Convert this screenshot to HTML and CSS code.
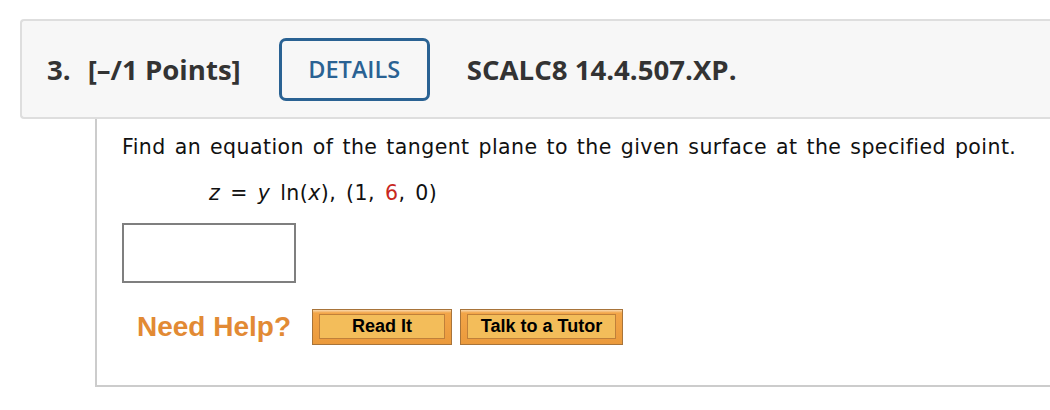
FILE: index.html
```html
<!DOCTYPE html>
<html>
<head>
<meta charset="utf-8">
<link rel="stylesheet" href="styles.css">
</head>
<body>
<div class="page">
  <div class="header">
    <span class="qnum">3.</span>
    <span class="points">[–/1 Points]</span>
    <button class="details">DETAILS</button>
    <span class="code">SCALC8 14.4.507.XP.</span>
  </div>
  <div class="content">
    <p class="prompt">Find an equation of the tangent plane to the given surface at the specified point.</p>
    <p class="formula"><i>z</i> = <i>y</i> ln(<i>x</i>), (1, <span class="red">6</span>, 0)</p>
    <div class="answer"></div>
    <div class="help">
      <span class="need">Need Help?</span>
      <span class="hbtn read"><span class="inner">Read It</span></span>
      <span class="hbtn tutor"><span class="inner">Talk to a Tutor</span></span>
    </div>
  </div>
</div>
</body>
</html>
```
FILE: styles.css
```css
html, body { margin: 0; padding: 0; background: #fff; }
.page { padding: 19px 0 0 20px; }
.header {
  box-sizing: border-box;
  height: 100px;
  border: 2px solid #dedede;
  border-right: none;
  border-radius: 4px 0 0 4px;
  background: #f7f7f7;
  display: flex;
  align-items: center;
  padding-left: 25px;
  font-family: "Open Sans", sans-serif;
  font-weight: 700;
  color: #333;
  font-size: 27.6px;
}
.qnum { margin-right: 17px; }
.details {
  box-sizing: border-box;
  width: 151px;
  height: 63px;
  margin: 0 37px 0 38px;
  border: 3px solid #2a6293;
  border-radius: 7px;
  background: transparent;
  color: #2a6293;
  font-family: "Open Sans", sans-serif;
  font-weight: 600;
  font-size: 23.5px;
  padding: 0;
}
.content {
  box-sizing: border-box;
  margin-left: 75px;
  height: 268px;
  border-left: 2px solid #cccccc;
  border-bottom: 2px solid #cccccc;
  padding: 15px 0 0 25px;
  font-family: "DejaVu Sans", Verdana, sans-serif;
  color: #111;
  font-size: 20.5px;
  letter-spacing: 0.43px;
  word-spacing: 2px;
}
.prompt { margin: 0; line-height: 26px; }
.formula { margin: 20px 0 0 87px; line-height: 26px; word-spacing: 3px; }
.red { color: #c8281e; }
.answer {
  box-sizing: border-box;
  width: 174px;
  height: 60px;
  margin-top: 17px;
  border: 2px solid #7f7f7f;
  background: #fff;
}
.help {
  display: flex;
  align-items: center;
  margin-top: 26px;
  padding-left: 15px;
  letter-spacing: normal;
  word-spacing: normal;
}
.need {
  font-family: "Liberation Sans", Arial, sans-serif;
  font-weight: 700;
  font-size: 28px;
  color: #e28a34;
  margin-right: 21px;
}
.hbtn {
  box-sizing: border-box;
  display: flex;
  height: 36px;
  padding: 4px 6px 5px 6px;
  border: 1px solid #a8743a;
  background: linear-gradient(#f9d8ac 0, #f2a548 3px, #eb9a3c 100%);
  margin-right: 8px;
}
.hbtn .inner {
  box-sizing: border-box;
  flex: 1;
  display: flex;
  align-items: center;
  justify-content: center;
  border: 1px solid #c0803a;
  background: #f3bd5a;
  font-family: "Liberation Sans", Arial, sans-serif;
  font-weight: 700;
  font-size: 18px;
  color: #000;
}
.read { width: 140px; }
.tutor { width: 163px; }
```
